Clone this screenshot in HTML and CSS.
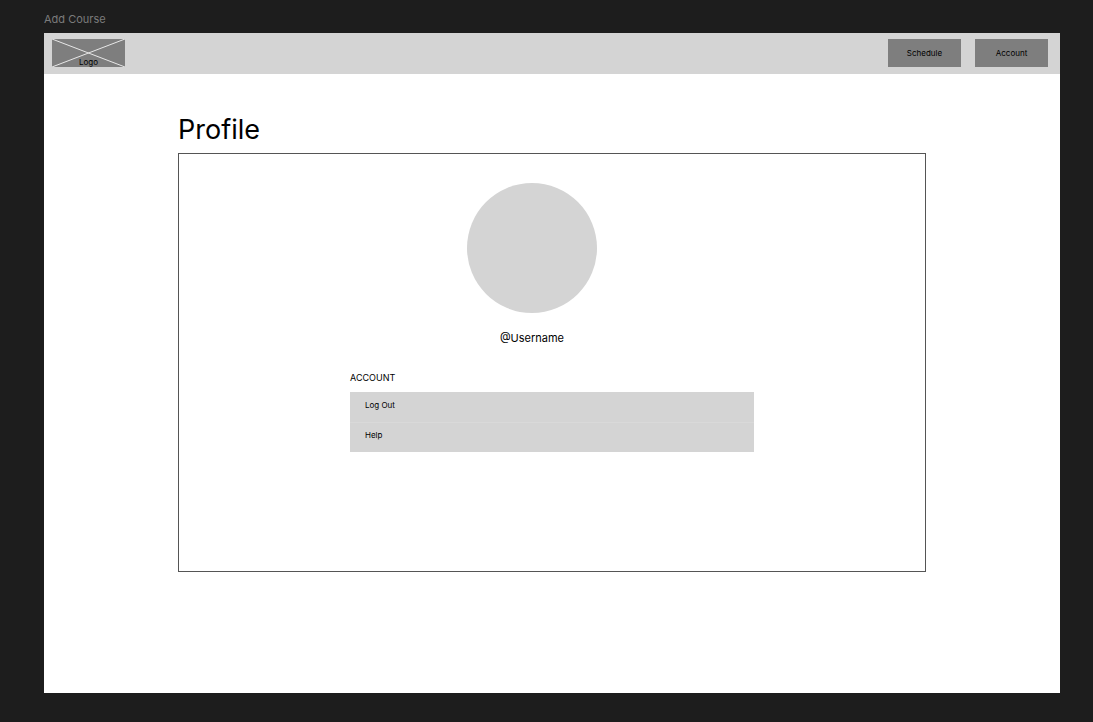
FILE: index.html
```html
<!DOCTYPE html>
<html lang="en">
<head>
<meta charset="utf-8">
<title>Add Course</title>
<link rel="stylesheet" href="styles.css">
</head>
<body class="canvas">
<p class="frame-label">Add Course</p>
<div class="frame">
  <header class="topbar">
    <a class="logo" href="#">
      <svg class="logo-cross" viewBox="0 0 74 28" preserveAspectRatio="none" aria-hidden="true"><path d="M0 0L74 28M0 28L74 0"/></svg>
      <span class="logo-text">Logo</span>
    </a>
    <nav class="nav">
      <button class="nav-button" type="button">Schedule</button>
      <button class="nav-button" type="button">Account</button>
    </nav>
  </header>
  <main class="content">
    <h1 class="title">Profile</h1>
    <section class="card">
      <div class="identity">
        <div class="avatar"></div>
        <p class="username">@Username</p>
      </div>
      <div class="account">
        <h2 class="account-heading">ACCOUNT</h2>
        <button class="row" type="button">Log Out</button>
        <button class="row" type="button">Help</button>
      </div>
    </section>
  </main>
</div>
</body>
</html>
```
FILE: styles.css
```css
* {
  box-sizing: border-box;
}

.canvas {
  display: flex;
  flex-direction: column;
  min-height: 100vh;
  margin: 0;
  padding: 12px 33px 29px 44px;
  background: #1d1d1d;
  color: #000;
  font-family: Inter, "Liberation Sans", sans-serif;
}

.frame-label {
  margin: 0 0 7px;
  color: #7b7b7b;
  font-size: 11px;
  line-height: 14px;
}

.frame {
  flex: 1;
  background: #fff;
}

.topbar {
  display: flex;
  justify-content: space-between;
  align-items: center;
  padding: 6px 12px 7px 8px;
  background: #d4d4d4;
}

.logo {
  position: relative;
  display: flex;
  align-items: flex-end;
  justify-content: center;
  width: 73px;
  height: 28px;
  background: #7e7e7e;
  color: #000;
  font-size: 8px;
  line-height: 10px;
  text-decoration: none;
}

.logo-cross {
  position: absolute;
  inset: 0;
  width: 100%;
  height: 100%;
  fill: none;
  stroke: #e8e8e8;
}

.logo-text {
  position: relative;
}

.nav {
  display: flex;
  gap: 14px;
}

.nav-button {
  width: 73px;
  height: 28px;
  padding: 0;
  border: 0;
  background: #7e7e7e;
  color: #000;
  font: 8px/10px Inter, "Liberation Sans", sans-serif;
}

.content {
  padding: 39px 134px 0;
}

.title {
  margin: 0 0 7px;
  font-size: 27px;
  font-weight: 400;
  line-height: 33px;
}

.card {
  min-height: 419px;
  padding: 29px 171px;
  border: 1px solid #555;
}

.identity {
  display: flex;
  flex-direction: column;
  align-items: center;
  padding-right: 40px;
}

.avatar {
  width: 130px;
  height: 130px;
  border-radius: 50%;
  background: #d4d4d4;
}

.username {
  margin: 18px 0 27px;
  font-size: 11px;
  line-height: 14px;
}

.account {
  display: flex;
  flex-direction: column;
}

.account-heading {
  margin: 0 0 8px;
  font-size: 9px;
  font-weight: 400;
  line-height: 12px;
}

.row {
  height: 30px;
  padding: 0 15px 4px;
  border: 0;
  background: #d4d4d4;
  color: #000;
  font: 8px/10px Inter, "Liberation Sans", sans-serif;
  text-align: left;
}

.row + .row {
  box-shadow: inset 0 1px #d9d9d9;
}
```
